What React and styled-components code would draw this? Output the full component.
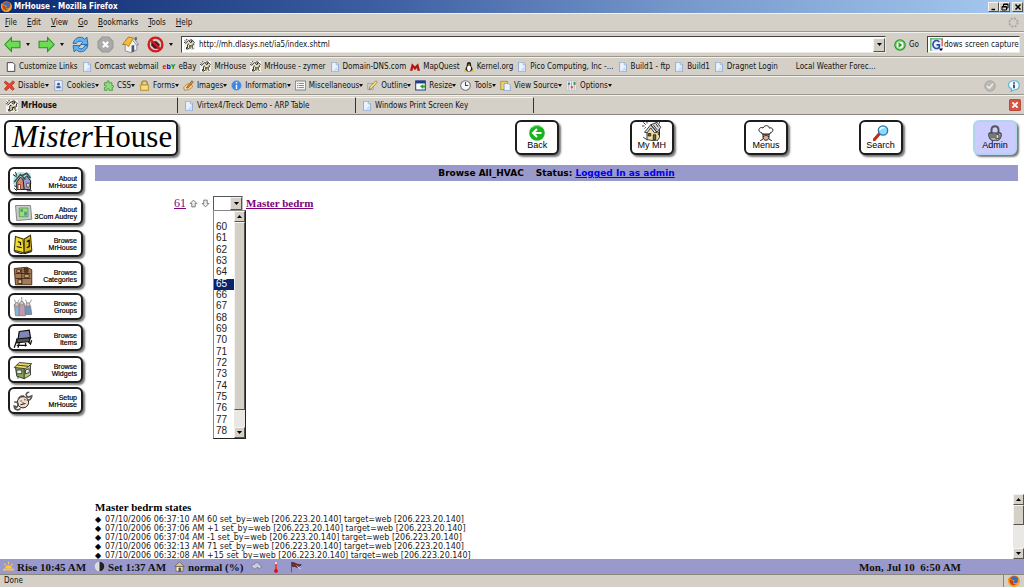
import React from "react";
import styled, { createGlobalStyle, css } from "styled-components";

const GlobalStyle = createGlobalStyle`
  *, *::before, *::after { box-sizing: border-box; }
  html, body { margin: 0; padding: 0; overflow: hidden; }
  button, input, select { font: inherit; color: inherit; margin: 0; padding: 0; }
  button { background: none; border: 0; white-space: nowrap; }
`;

const raised = css`
  background: #d4d0c8;
  border: 1px solid;
  border-color: #f6f4f0 #55534e #55534e #f6f4f0;
`;

const Window = styled.div`
  display: flex;
  flex-direction: column;
  height: 100vh;
  background: #d4d0c8;
  color: #111;
  font: 8px/12px "DejaVu Sans Condensed", "DejaVu Sans", sans-serif;
  svg { display: block; flex: none; }
`;

const TitleBar = styled.div`
  display: flex;
  align-items: center;
  flex: none;
  height: 13px;
  padding: 0 1px;
  gap: 2px;
  color: #fff;
  font-weight: bold;
  background: linear-gradient(90deg, #0d2b71, #3f60a3 38%, #7597cb 66%, #a6caf0);
`;

const WindowButtons = styled.div`
  display: flex;
  margin-left: auto;
`;

const WindowButton = styled.button`
  ${raised}
  display: flex;
  align-items: center;
  justify-content: center;
  width: 11px;
  height: 10px;
  margin-left: ${(props) => (props.$apart ? "2px" : 0)};
`;

const Bar = styled.div`
  display: flex;
  align-items: center;
  flex: none;
  height: ${(props) => props.$height || 19}px;
  padding: 0 ${(props) => props.$pad || 4}px;
  gap: ${(props) => props.$gap || 0}px;
  border-top: 1px solid #f4f2ee;
  border-bottom: 1px solid #9b978e;
  white-space: nowrap;
`;

const Spacer = styled.span`
  flex: 1;
`;

const MenuButton = styled.button`
  padding: 0 5px 0 0;
  margin-right: 5px;
  &::first-letter { text-decoration: underline; }
`;

const NavButton = styled.button`
  display: flex;
  align-items: center;
  gap: 5px;
`;

const Caret = styled.span`
  width: 0;
  height: 0;
  border: 2px solid transparent;
  border-top: 3px solid #111;
  border-bottom: 0;
`;

const Field = styled.div`
  display: flex;
  align-items: center;
  gap: ${(props) => (props.$grow ? "4px" : "1px")};
  height: 17px;
  padding-left: 2px;
  background: #fff;
  border: 1px solid;
  border-color: #444 #ece9e2 #ece9e2 #444;
  flex: ${(props) => (props.$grow ? 1 : "none")};
  width: ${(props) => (props.$grow ? "auto" : "93px")};
  input { flex: 1; min-width: 0; border: 0; outline: 0; background: none; }
`;

const DropButton = styled.button`
  ${raised}
  display: flex;
  align-items: center;
  justify-content: center;
  flex: none;
  width: ${(props) => props.$width || 12}px;
  height: ${(props) => props.$height || 14}px;
`;

const Bookmark = styled.a`
  display: flex;
  align-items: center;
  gap: 3px;
  color: inherit;
  text-decoration: none;
`;

const ToolButton = styled.button`
  display: flex;
  align-items: center;
  gap: 3px;
  span { display: flex; align-items: center; }
`;

const ToolInfo = styled.div`
  display: flex;
  gap: 12px;
  margin-left: auto;
`;

const Tabs = styled.div`
  display: flex;
  flex: none;
  height: 20px;
  padding-right: 3px;
  align-items: center;
  border-top: 1px solid #f4f2ee;
  border-bottom: 1px solid #89857e;
`;

const Tab = styled.button`
  display: flex;
  align-items: center;
  gap: 3px;
  width: 178px;
  height: 16px;
  padding-left: 6px;
  border-top: 1px solid #f4f2ee;
  border-right: 1px solid #333;
  font-weight: ${(props) => (props.$active ? "bold" : "normal")};
`;

const Page = styled.div`
  display: flex;
  flex-direction: column;
  flex: 1;
  min-height: 0;
  background: #fff;
  color: #000;
`;

const Header = styled.header`
  display: flex;
  justify-content: space-between;
  flex: none;
  height: 50px;
  padding: 5px 7px 0 4px;
`;

const plate = css`
  border: 2px solid #1d1d1d;
  border-radius: 6px;
  background: #fff;
  box-shadow: 2px 2px 2px #777;
`;

const Logo = styled.div`
  ${plate}
  width: 174px;
  height: 36px;
  padding-left: 6px;
  font: 31px/30px "Liberation Serif", serif;
  white-space: nowrap;
`;

const TopNav = styled.nav`
  display: flex;
  justify-content: space-between;
  width: 49vw;
`;

const TopButton = styled.button`
  ${plate}
  display: flex;
  flex-direction: column;
  align-items: center;
  justify-content: flex-end;
  width: 44px;
  height: 35px;
  padding-bottom: 3px;
  font: 9px/9px "Liberation Sans", sans-serif;
  ${(props) =>
    props.$active &&
    css`
      background: #ccccff;
      border-color: #aed6ee;
    `}
`;

const Columns = styled.div`
  display: flex;
  flex: 1;
  min-height: 0;
`;

const Sidebar = styled.nav`
  display: flex;
  flex-direction: column;
  justify-content: space-between;
  flex: none;
  width: 95px;
  height: 249px;
  padding: 2px 0 0 8px;
`;

const SideButton = styled.button`
  ${plate}
  display: flex;
  align-items: center;
  justify-content: space-between;
  width: 75px;
  height: 27px;
  padding: 2px 4px 0 3px;
  font: 7px/7px "Liberation Sans", sans-serif;
  text-align: right;
  -webkit-text-stroke: 0.2px #000;
  span { white-space: pre; }
`;

const Content = styled.main`
  display: flex;
  flex-direction: column;
  flex: 1;
  min-width: 0;
`;

const StatusLine = styled.div`
  display: flex;
  justify-content: center;
  gap: 12px;
  flex: none;
  height: 16px;
  margin-right: 6px;
  background: #9999cc;
  font: bold 9px/16px "DejaVu Sans", sans-serif;
`;

const Device = styled.div`
  display: flex;
  align-items: center;
  gap: 3px;
  padding: 14px 0 0 79px;
  font: 11px/16px "Liberation Serif", serif;
`;

const Link = styled.a`
  color: ${(props) => (props.$visited ? "#800080" : "#0000ee")};
  font-weight: ${(props) => (props.$strong ? "bold" : "inherit")};
  font-size: ${(props) => (props.$size ? `${props.$size}px` : "inherit")};
  text-decoration: underline;
`;

const Combo = styled.div`
  position: relative;
  display: flex;
  align-items: center;
  width: 30px;
  height: 15px;
  border: 1px solid;
  border-color: #555 #bbb #bbb #555;
  select {
    flex: 1;
    min-width: 0;
    height: 13px;
    border: 0;
    appearance: none;
    background: #fff;
  }
`;

const Popup = styled.div`
  position: absolute;
  top: 13px;
  left: -1px;
  display: flex;
  width: 33px;
  height: 229px;
  border: 1px solid;
  border-color: #888 #222 #222 #888;
  background: #fff;
`;

const Options = styled.ul`
  display: grid;
  grid-auto-rows: 1fr;
  flex: 1;
  margin: 0;
  padding: 0;
  list-style: none;
  font: 10px/10px "Liberation Sans", sans-serif;
`;

const Option = styled.li`
  padding-left: 2px;
  color: ${(props) => (props.$selected ? "#fff" : "#222")};
  background: ${(props) => (props.$selected ? "#0a246a" : "none")};
`;

const ScrollTrack = styled.div`
  display: flex;
  flex-direction: column;
  flex: none;
  width: 11px;
  background: #eae8e4;
`;

const Thumb = styled.div`
  ${raised}
  height: ${(props) => props.$height};
`;

const Frame = styled.section`
  display: flex;
  justify-content: space-between;
  flex: none;
  height: 65px;
  margin-top: auto;
  overflow: hidden;
`;

const States = styled.div`
  padding-top: 6px;
  h2 { margin: 0 0 1px; font: bold 11px/14px "Liberation Serif", serif; }
  ul { margin: 0; padding: 0; list-style: none; font: 8px/9px "DejaVu Sans", sans-serif; }
  li { display: flex; align-items: center; gap: 5px; white-space: nowrap; color: #222; }
  li::before { content: "◆"; width: 5px; color: #000; }
`;

const Footer = styled.footer`
  display: flex;
  align-items: center;
  flex: none;
  gap: 8px;
  height: 15px;
  padding: 0 63px 0 3px;
  background: #9999cc;
  font: bold 11px/14px "Liberation Serif", serif;
  white-space: pre;
  > span { display: flex; align-items: center; gap: 3px; }
`;

const StatusBar = styled.div`
  display: flex;
  align-items: center;
  justify-content: space-between;
  flex: none;
  height: 13px;
  padding: 0 4px 0 4px;
  border-top: 1px solid #8b877f;
`;

const StatusPanel = styled.div`
  padding-left: 4px;
  border-left: 1px solid #8b877f;
`;

/* ---------- icons, all drawn on a 16 unit grid ---------- */

const Svg = ({ size = 11, children }) => (
  <svg width={size} height={size} viewBox="0 0 16 16" aria-hidden="true">
    {children}
  </svg>
);

const drawings = {
  page: (
    <g stroke="#6f93c4">
      <path d="M2.500.500h8l3 3v12h-11z" fill="#e9f2ff" />
      <path d="M10 1v3.500h3.500" fill="#fff" />
      <path d="M5 14h7V7z" fill="#c4dafa" stroke="none" />
    </g>
  ),
  blank: <path d="M2 1h9l3 3v11H2z" fill="#fff" stroke="#333" strokeWidth="1.400" />,
  house: (
    <g>
      <path d="M0 0h16v16H0z" fill="#f3f2ee" />
      <path d="M5 7l3-3 5 4v6l-8 1z" fill="#efe6b8" />
      <path d="M2 7l5-5 3 4M8 2l3-1 4 4-2 2M1 2l2 2M0 5h2M4 0v2M5 8v5M8 9l1 5M5 15l3-2M12 8v5M14 7v2M12 15l2-2" fill="none" stroke="#222" strokeWidth="1.300" />
      <path d="M10 2h2v3h-2zM6 6l2 2H5zM3 12h2v3H3zM9 9h2v2H9z" fill="#222" />
    </g>
  ),
  cross: <path d="M2 1.500 8 6l5-5 2.500 2.500L11 8l4 5-2.500 2L8 11l-5 4.500L.5 13 5 8 .5 4z" fill="#e5452e" stroke="#a92716" />,
  cookie: (
    <g>
      <path d="M2.500.500h11v15h-11z" fill="#e6eeff" stroke="#7d90b5" />
      <circle cx="8" cy="6" r="2" fill="#35589a" />
      <path d="M5 12V9h6v3z" fill="#35589a" />
    </g>
  ),
  puzzle: <path d="M2 4h4c-1-4 4-4 3 0h4v4c4-1 3 4 0 3l1 4H9c0-4-4-3-3 0H2v-4c4 0 3-4 0-3z" fill="#8edc7e" stroke="#2e8a28" />,
  lock: (
    <g>
      <path d="M4 8V5c0-5 8-5 8 0v3" fill="none" stroke="#b28a1d" strokeWidth="2" />
      <path d="M2 7h12v8H2z" fill="#f5cf55" stroke="#a77c12" />
      <path d="M4 10h8M4 12h8" stroke="#fff2a8" />
    </g>
  ),
  brush: (
    <g>
      <path d="M1 11c3-5 7-6 11-5l2 4-5 4-7 1z" fill="#f3d79c" stroke="#9c7334" />
      <path d="m5 11 8-10 2 2-8 9z" fill="#e58b22" stroke="#7b5325" />
    </g>
  ),
  info: (
    <g>
      <circle cx="8" cy="8" r="7.200" fill="#3d86e0" stroke="#94bdf0" />
      <path d="M7 7h2v6H7zM7 3h2v2H7z" fill="#fff" />
    </g>
  ),
  form: (
    <g>
      <path d="M.5 1.500h15v13H.5z" fill="#f7f7f7" stroke="#555" />
      <path d="M3 5h2m1 0h7M3 8h2m1 0h7M3 11h2m1 0h7" stroke="#555" />
    </g>
  ),
  pencil: (
    <g>
      <path d="M1 5h8v9H1z" fill="none" stroke="#7d96c8" />
      <path d="M3 14 5 9l8-8 2 2-8 9z" fill="#ffe48a" stroke="#8c6c1d" />
    </g>
  ),
  resize: (
    <g>
      <path d="M1 1.500h14v13H1z" fill="#fff" stroke="#1c3d8c" strokeWidth="1.500" />
      <path d="M1 1h14v4H1z" fill="#1c3d8c" />
      <path d="m7 9 5-3v2h3v3h-3v2z" fill="#2ca52f" />
    </g>
  ),
  clock: (
    <g>
      <circle cx="8" cy="8" r="7" fill="#f4f6fa" stroke="#777" strokeWidth="1.500" />
      <path d="M8 3v5h4" fill="none" stroke="#444" strokeWidth="1.500" />
    </g>
  ),
  paste: (
    <g>
      <path d="M1 2h10v12H1z" fill="#f2cf68" stroke="#9e7c2b" />
      <path d="M6 5h6l3 3v7.500H6z" fill="#eaf2ff" stroke="#6f93c4" />
    </g>
  ),
  sliders: (
    <g>
      <path d="M1 1h14v14H1z" fill="#eee" stroke="#bbb" />
      <path d="M4 2v12M8 2v12M12 2v12" stroke="#999" />
      <path d="M3 4h3v3H3z" fill="#4b79c9" />
      <path d="M7 9h3v3H7z" fill="#d34b4b" />
      <path d="M11 3h3v4h-3z" fill="#399a58" />
    </g>
  ),
  map: <path d="M0 14 3 2l5 5 5-5 3 12h-4l-1-5-3 4-3-4-1 5z" fill="#b81313" />,
  penguin: (
    <g>
      <path d="M8 0c5 0 2 5 5 9 2 4 0 6-5 6s-7-2-5-6c3-4 0-9 5-9z" fill="#222" />
      <ellipse cx="8" cy="10" rx="3" ry="4.500" fill="#fff" />
      <path d="M6 4h4L8 6zM2 12l4 3H0zM14 12l-4 3h6z" fill="#edb51c" />
    </g>
  ),
  firefox: (
    <g>
      <circle cx="8" cy="8" r="7.500" fill="#e57717" />
      <circle cx="8.500" cy="6.500" r="4.800" fill="#3e69bd" />
      <path d="M1 3c0 4 5 2 8 5-3 0-2 4 2 3 3-1 4-5 2-9 5 5 3 14-5 14C1 16-2 8 1 3z" fill="#f3a52a" />
      <path d="M2 5c1 2 3 1 5 3-1 3 1 5 4 4-3 4-10 1-9-7z" fill="#c9400d" />
    </g>
  ),
  arrowLeft: <path d="M.7 8 7 1.500V5h8v6H7v3.500z" fill="#6edb55" stroke="#2c8f2a" />,
  arrowRight: <path d="M15.300 8 9 1.500V5H1v6h8v3.500z" fill="#6edb55" stroke="#2c8f2a" />,
  reload: (
    <g fill="#65b1ee" stroke="#1d5fa8" strokeWidth=".8">
      <path d="M1 7c1-5 7-8 11-4l2-2 1 7H8l2-2C8 4 5 5 4 7z" />
      <path d="M15 9c-1 5-7 8-11 4l-2 2-1-6h7l-2 2c2 2 5 1 6-2z" />
    </g>
  ),
  stop: (
    <g>
      <path d="M5 1h6l4 4v6l-4 4H5l-4-4V5z" fill="#aaa" stroke="#999" />
      <path d="m5.500 5.500 5 5m0-5-5 5" stroke="#fff" strokeWidth="2" />
    </g>
  ),
  home: (
    <g>
      <path d="M3 8v6l5 1.500L14 13V7l-4-4z" fill="#f4f4f4" stroke="#778" strokeWidth=".7" />
      <path d="M9 9v6.500l2.500-1V8.500z" fill="#4a5877" />
      <path d="M.5 8 6 1l5 1-5 8-2-2z" fill="#f5bd3a" stroke="#a7711a" strokeWidth=".8" />
      <path d="M11 2l4.500 6-2 .5-3-4" fill="#dce9f8" stroke="#678" strokeWidth=".7" />
      <path d="M12 1h2v3h-2z" fill="#667" />
    </g>
  ),
  block: (
    <g>
      <path d="M4 5h5l3 3-1 4H7L4 9z" fill="#513" />
      <circle cx="8" cy="8" r="6.500" fill="none" stroke="#d21d1d" strokeWidth="2.200" />
      <path d="m3.500 3.500 9 9" stroke="#d21d1d" strokeWidth="2" />
    </g>
  ),
  go: (
    <g>
      <circle cx="8" cy="8" r="7" fill="#7ad46b" stroke="#2b9329" strokeWidth="1.500" />
      <circle cx="8" cy="8" r="4.500" fill="#fff" />
      <path d="M6 4v8l5-4z" fill="#2ba029" />
    </g>
  ),
  google: (
    <g>
      <path d="M0 0h16v16H0z" fill="#e8effc" />
      <path d="M1 0v16M0 1h16" stroke="#57b05c" strokeWidth="1.500" />
      <path d="M15 1v9" stroke="#d64c43" strokeWidth="1.500" />
      <path d="M11.500 5c-3-4-8-1-8 3s5 7 8 3V8.500H8" fill="none" stroke="#2949a8" strokeWidth="2" />
      <path d="M11 13h5l-2.500 3z" fill="#000" />
    </g>
  ),
  throbber: <circle cx="8" cy="8" r="6" fill="none" stroke="#aaa" strokeWidth="3" strokeDasharray="3 1.700" />,
  check: (
    <g>
      <circle cx="8" cy="8" r="7" fill="#bcbab5" stroke="#a19e98" />
      <path d="m4 8 3 3 5-6" fill="none" stroke="#eee" strokeWidth="2" />
    </g>
  ),
  bubble: (
    <g>
      <path d="M8 1c9 0 9 12 1 12l-5 2 1-3C-2 9 0 1 8 1z" fill="#f5fbff" stroke="#58b4df" strokeWidth="1.500" />
      <path d="M7 6h2v5H7zM7 3h2v2H7z" fill="#124" />
    </g>
  ),
  close: (
    <g>
      <rect x=".5" y=".5" width="15" height="15" rx="2" fill="#d9513f" stroke="#a33426" />
      <path d="m4.500 4.500 7 7m0-7-7 7" stroke="#fff" strokeWidth="2.500" />
    </g>
  ),
  back: (
    <g>
      <circle cx="8" cy="8" r="7.800" fill="#18b41e" />
      <path d="M3 3c3-3 8-3 10 0" stroke="#7de26c" fill="none" />
      <path d="M12.500 8H4m4-4L4 8l4 4" fill="none" stroke="#fff" strokeWidth="2" />
    </g>
  ),
  cottage: (
    <g stroke="#222" strokeWidth=".7">
      <path d="M4 8v7l8 1 2-3V5l-4-3z" fill="#eee3a4" />
      <path d="m2 9 5-6 5 6-2 .5-3-4-3 4zM7 3l5-2 3 4-3 4z" fill="#ddd" />
      <path d="M5 10h2v2H5zM9 11h2v4H9z" fill="#776532" />
      <path d="M11 0h3v2M1 1l2 2M0 4h2M4 0v2M2 6l1-1M1 13l3 2M13 9h1v2h-1zM9 3l3 4M11 2l2 3" fill="none" stroke="#222" />
    </g>
  ),
  chef: (
    <g stroke="#222" strokeWidth="1">
      <path d="M5 9h6v4c-1 3-5 3-6 0z" fill="#e4ad91" />
      <path d="M4 8C-2 6 2 1 5 3c2-4 7-2 6 0 5-1 5 4 1 5v1H4z" fill="#fff" />
      <path d="M5 12c2-2 4-2 6 0M2 16l3-2M14 16l-3-2" fill="none" />
    </g>
  ),
  magnifier: (
    <g>
      <path d="m1 15 6-7" stroke="#bf2d18" strokeWidth="3" strokeLinecap="round" />
      <circle cx="10" cy="5.500" r="4.700" fill="#85dcff" stroke="#31759f" strokeWidth="1.300" />
      <path d="M7 5c0-2 2-3 4-2" stroke="#fff" strokeWidth="1.500" fill="none" />
    </g>
  ),
  padlock: (
    <g>
      <path d="M4.500 8V5c0-5 7-5 7 0v3" stroke="#555" strokeWidth="2" fill="none" />
      <path d="M2 8h12c1 5-2 8-6 8s-7-3-6-8z" fill="#aaa" stroke="#222" />
      <path d="M3 10h5M3 12h5M9 9l3 1v3l-3 1z" stroke="#444" fill="#ddd" />
    </g>
  ),
  village: (
    <g>
      <path d="M1 2 5 0l9 1 1 8-3 5H4L0 9z" fill="#a5e6e6" />
      <path d="M3 8l3-4 3 3v7H3z" fill="#d08a6c" stroke="#222" strokeWidth=".8" />
      <path d="m8 6 3-3 3 4v7H9z" fill="#8f9fd0" stroke="#222" strokeWidth=".8" />
      <path d="M1 8l5-6 4 4M7 3l4-2 3 4" stroke="#444" strokeWidth="1.200" fill="none" />
      <path d="M4 10h2v4H4zM11 9h2v3h-2z" fill="#ffd" stroke="#733" strokeWidth=".7" />
      <path d="M0 2l3 2M2 0l1 3M1 13l2 2M1 11l2 1M11 15h4" stroke="#222" strokeWidth=".8" />
    </g>
  ),
  audrey: (
    <g>
      <path d="M2 2h12l1 11-12 1z" fill="#c8cfc9" stroke="#888" strokeWidth=".8" />
      <path d="M5 4h7v7H5z" fill="#9ddd6a" stroke="#597" strokeWidth=".7" />
      <path d="M6 5h2v2H6zM9 7h2v3H9z" fill="#519186" />
    </g>
  ),
  book: (
    <g stroke="#4a3b00" strokeWidth=".9">
      <path d="M2 2 8 4l1 11-8-2z" fill="#f0dc32" />
      <path d="m9 4 5-3 1 12-6 2z" fill="#d6b91d" />
      <path d="M4 6l2 1v2M3 10l4 1M11 6l2-1v5l-2 1M1 14l7 2 7-2" fill="none" stroke="#111" strokeWidth="1" />
    </g>
  ),
  cabinet: (
    <g stroke="#3d2512" strokeWidth=".7">
      <path d="m1 2 10-1 4 2v12H2z" fill="#a67a55" />
      <path d="M2 6h12M2 10h12M7 2v13" />
      <path d="M3 3h3v2H3zM9 7h4v2H9zM4 11h3v3H4z" fill="#dfc39b" />
      <path d="M9 2h3v3H9z" fill="#5c3a22" />
    </g>
  ),
  people: (
    <g stroke="#778" strokeWidth=".6">
      <path d="M1 6h4v9H2z" fill="#8db1cf" />
      <path d="M5 5h4l1 10H5z" fill="#c09bb0" />
      <path d="M10 7h4l1 7h-5z" fill="#7196b5" />
      <path d="M1 2l2 4 2-4M7 0v5M10 2l2 5 3-5" fill="none" />
      <circle cx="3" cy="6" r="1.500" fill="#e9c6ae" />
      <circle cx="7" cy="5" r="1.500" fill="#e9c6ae" />
      <circle cx="12" cy="6" r="1.500" fill="#e9c6ae" />
    </g>
  ),
  machine: (
    <g stroke="#111" strokeWidth="1">
      <path d="m5 2 8-1 1 6-10 2z" fill="#8087b5" />
      <path d="m3 8 11-1-1 3-10 1z" fill="#555" />
      <path d="M3 9 1 15M5 11l-1 4M12 10l2 2 1-3M10 11v3M3 13h8" fill="none" />
    </g>
  ),
  shop: (
    <g stroke="#333" strokeWidth=".7">
      <path d="M2 6h7v9l-6-2z" fill="#88a84e" />
      <path d="m9 6 5-2v8l-5 3z" fill="#b9cb7d" />
      <path d="m1 6 4-4 10 1-5 4z" fill="#e3da6b" />
      <path d="M3 8h4v3H3zM10 8l3-1v3l-3 1z" fill="#eee" />
      <path d="m3 4 9 1M4 13v2" />
    </g>
  ),
  wrench: (
    <g stroke="#222" strokeWidth=".8">
      <circle cx="8" cy="9" r="4.500" fill="#f3dccb" />
      <path d="M13 1c-3 0-3 3-1 4l3-1c0 2-2 4-4 3M1 9c3-1 4 2 2 4l-2-1c0 3 3 4 5 2" fill="none" stroke="#555" strokeWidth="1.300" />
      <path d="M6 8h1M9 7h1M6 11l4-1M8 9v1M4 6l2-2 3 0" fill="none" />
    </g>
  ),
  up: <path d="m8 2 6 6h-3v6H5V8H2z" fill="#eee" stroke="#777" strokeWidth="1.700" />,
  down: <path d="m8 14 6-6h-3V2H5v6H2z" fill="#eee" stroke="#777" strokeWidth="1.700" />,
  sunrise: (
    <g>
      <path d="M3 11a5 5 0 0 1 10 0z" fill="#ffc928" />
      <path d="M8 1v3M2 4l2 2M14 4l-2 2" stroke="#ffd659" strokeWidth="1.500" />
      <path d="M0 11h16v3H0z" fill="#f0c05a" />
    </g>
  ),
  moon: (
    <g>
      <circle cx="8" cy="8" r="7" fill="#ddd" />
      <path d="M8 1a7 7 0 0 1 0 14z" fill="#222" />
    </g>
  ),
  littleHouse: (
    <g stroke="#444" strokeWidth=".8">
      <path d="M3 8h10v7H3z" fill="#fff4c8" />
      <path d="m1 8 7-7 7 7z" fill="#e2c27c" />
      <path d="M7 10h3v5H7z" fill="#7a5428" />
    </g>
  ),
  cloud: <path d="M3 10C-1 8 2 4 5 5c1-4 7-3 7 0 5 1 3 6 0 6l-3-2-3 3z" fill="#ccd" stroke="#667" />,
  thermometer: (
    <g>
      <path d="M6.500 1h3v10h-3z" fill="#fff" stroke="#a66" strokeWidth=".6" />
      <path d="M7 4h2v7c3 1 1 5-1 5s-4-4-1-5z" fill="#d60f1a" />
    </g>
  ),
  flag: (
    <g>
      <path d="M2 1v14" stroke="#555" strokeWidth="1.200" />
      <path d="M3 2c4 0 5 3 12 3-3 2-5 4-7 3-2-2-3 0-5-1z" fill="#922" stroke="#222" />
      <path d="m9 6 5 5" stroke="#fff" />
    </g>
  ),
};

const Icon = ({ name, size }) => <Svg size={size}>{drawings[name]}</Svg>;

const Triangle = ({ up }) => (
  <svg width="5" height="3" viewBox="0 0 5 3" aria-hidden="true">
    <path d={up ? "M0 3h5L2.500 0z" : "M0 0h5L2.500 3z"} fill="#000" />
  </svg>
);

/* ---------- data ---------- */

const menus = ["File", "Edit", "View", "Go", "Bookmarks", "Tools", "Help"];

const bookmarks = [
  ["blank", "Customize Links"],
  ["page", "Comcast webmail"],
  ["ebay", "eBay"],
  ["house", "MrHouse"],
  ["house", "MrHouse - zymer"],
  ["page", "Domain-DNS.com"],
  ["map", "MapQuest"],
  ["penguin", "Kernel.org"],
  ["page", "Pico Computing, Inc -..."],
  ["page", "Build1 - ftp"],
  ["page", "Build1"],
  ["page", "Dragnet Login"],
  [null, "Local Weather Forec..."],
];

const tools = [
  ["cross", "Disable"],
  ["cookie", "Cookies"],
  ["puzzle", "CSS"],
  ["lock", "Forms"],
  ["brush", "Images"],
  ["info", "Information"],
  ["form", "Miscellaneous"],
  ["pencil", "Outline"],
  ["resize", "Resize"],
  ["clock", "Tools"],
  ["paste", "View Source"],
  ["sliders", "Options"],
];

const topButtons = [
  ["back", "Back"],
  ["cottage", "My MH"],
  ["chef", "Menus"],
  ["magnifier", "Search"],
  ["padlock", "Admin"],
];

const sideButtons = [
  ["village", "About\nMrHouse"],
  ["audrey", "About\n3Com Audrey"],
  ["book", "Browse\nMrHouse"],
  ["cabinet", "Browse\nCategories"],
  ["people", "Browse\nGroups"],
  ["machine", "Browse\nItems"],
  ["shop", "Browse\nWidgets"],
  ["wrench", "Setup\nMrHouse"],
];

const temperatures = ["", ...Array.from({ length: 19 }, (_, i) => String(60 + i))];

const source = "set_by=web [206.223.20.140] target=web [206.223.20.140]";
const states = [
  `07/10/2006 06:37:10 AM 60 ${source}`,
  `07/10/2006 06:37:06 AM +1 ${source}`,
  `07/10/2006 06:37:04 AM -1 ${source}`,
  `07/10/2006 06:32:13 AM 71 ${source}`,
  `07/10/2006 06:32:08 AM +15 ${source}`,
];

const EbayMark = styled.b`
  display: flex;
  font: bold 7px/10px "Liberation Sans", sans-serif;
  i { font-style: normal; }
  i:nth-child(1) { color: #e00; }
  i:nth-child(2) { color: #00c; }
  i:nth-child(3) { color: #080; }
`;

const BookmarkGap = styled.span`
  width: 11px;
`;

const Scrollbar = ({ thumb }) => (
  <ScrollTrack>
    <DropButton $width={11} $height={11} aria-label="Scroll up">
      <Triangle up />
    </DropButton>
    <Thumb $height={thumb} />
    <Spacer />
    <DropButton $width={11} $height={11} aria-label="Scroll down">
      <Triangle />
    </DropButton>
  </ScrollTrack>
);

const bookmarkIcon = (icon) => {
  if (!icon) return <BookmarkGap />;
  if (icon === "ebay") {
    return (
      <EbayMark aria-hidden="true">
        <i>e</i>
        <i>b</i>
        <i>Y</i>
      </EbayMark>
    );
  }
  return <Icon name={icon} size={icon === "house" ? 11 : 10} />;
};

const Browser = () => (
  <>
    <TitleBar>
      <Icon name="firefox" />
      MrHouse - Mozilla Firefox
      <WindowButtons>
        <WindowButton aria-label="Minimize">
          <Svg size={8}><path d="M3 13h7" stroke="#000" strokeWidth="3" /></Svg>
        </WindowButton>
        <WindowButton aria-label="Restore">
          <Svg size={8}>
            <path d="M5 6V2h9v8h-3M2 7h9v7H2zM5 3h9M2 8h9" fill="none" stroke="#000" strokeWidth="2" />
          </Svg>
        </WindowButton>
        <WindowButton $apart aria-label="Close">
          <Svg size={8}><path d="m3 3 10 10m0-10L3 13" stroke="#000" strokeWidth="3" /></Svg>
        </WindowButton>
      </WindowButtons>
    </TitleBar>
    <Bar $pad={5}>
      {menus.map((name) => (
        <MenuButton key={name}>{name}</MenuButton>
      ))}
      <Spacer />
      <Icon name="throbber" size={11} />
    </Bar>
    <Bar $height={25} $gap={8}>
      <NavButton aria-label="Back"><Icon name="arrowLeft" size={17} /><Caret /></NavButton>
      <NavButton aria-label="Forward"><Icon name="arrowRight" size={17} /><Caret /></NavButton>
      <NavButton aria-label="Reload"><Icon name="reload" size={17} /></NavButton>
      <NavButton aria-label="Stop"><Icon name="stop" size={17} /></NavButton>
      <NavButton aria-label="Home"><Icon name="home" size={17} /></NavButton>
      <NavButton aria-label="Block"><Icon name="block" size={17} /><Caret /></NavButton>
      <Field $grow>
        <Icon name="house" />
        <input aria-label="Address" defaultValue="http://mh.dlasys.net/ia5/index.shtml" />
        <DropButton aria-label="Show history"><Triangle /></DropButton>
      </Field>
      <ToolButton><Icon name="go" size={12} /> Go</ToolButton>
      <Field>
        <Icon name="google" size={13} />
        <input aria-label="Search" defaultValue="dows screen capture" />
      </Field>
    </Bar>
    <Bar $gap={4} $pad={6}>
      {bookmarks.map(([icon, name]) => (
        <Bookmark key={name} href="#">
          {bookmarkIcon(icon)}
          {name}
        </Bookmark>
      ))}
    </Bar>
    <Bar $gap={4} $pad={4}>
      {tools.map(([icon, name]) => (
        <ToolButton key={name}>
          <Icon name={icon} />
          <span>{name}<Caret /></span>
        </ToolButton>
      ))}
      <ToolInfo>
        <Icon name="check" size={12} />
        <Icon name="bubble" size={12} />
      </ToolInfo>
    </Bar>
    <Tabs>
      <Tab $active><Icon name="house" size={12} />MrHouse</Tab>
      <Tab><Icon name="page" size={10} />Virtex4/Treck Demo - ARP Table</Tab>
      <Tab><Icon name="page" size={10} />Windows Print Screen Key</Tab>
      <Spacer />
      <Icon name="close" size={12} />
    </Tabs>
  </>
);

const Thermostat = () => (
  <Device>
    <Link href="#" $visited $size={12}>61</Link>
    <Icon name="up" size={9} />
    <Icon name="down" size={9} />
    <Combo>
      <select aria-label="Master bedrm" defaultValue="">
        {temperatures.map((value) => (
          <option key={value}>{value}</option>
        ))}
      </select>
      <DropButton $height={13} aria-label="Open list"><Triangle /></DropButton>
      <Popup>
        <Options role="listbox">
          {temperatures.map((value) => (
            <Option key={value} role="option" $selected={value === "65"}>
              {value}
            </Option>
          ))}
        </Options>
        <Scrollbar thumb="188px" />
      </Popup>
    </Combo>
    <Link href="#" $visited $strong>Master bedrm</Link>
  </Device>
);

const App = () => (
  <Window>
    <GlobalStyle />
    <Browser />
    <Page>
      <Header>
        <Logo><i>Mister</i>House</Logo>
        <TopNav>
          {topButtons.map(([icon, name]) => (
            <TopButton key={name} $active={name === "Admin"}>
              <Icon name={icon} size={name === "My MH" ? 20 : 16} />
              {name}
            </TopButton>
          ))}
        </TopNav>
      </Header>
      <Columns>
        <Sidebar>
          {sideButtons.map(([icon, name]) => (
            <SideButton key={name}>
              <Icon name={icon} size={20} />
              <span>{name}</span>
            </SideButton>
          ))}
        </Sidebar>
        <Content>
          <StatusLine>
            <span>Browse All_HVAC</span>
            <span>
              Status: <Link href="#">Logged In as admin</Link>
            </span>
          </StatusLine>
          <Thermostat />
          <Frame>
            <States>
              <h2>Master bedrm states</h2>
              <ul>
                {states.map((line) => (
                  <li key={line}>{line}</li>
                ))}
              </ul>
            </States>
            <Scrollbar thumb="20px" />
          </Frame>
        </Content>
      </Columns>
    </Page>
    <Footer>
      <span><Icon name="sunrise" />Rise 10:45 AM</span>
      <span><Icon name="moon" />Set 1:37 AM</span>
      <span><Icon name="littleHouse" />normal (%)</span>
      <Icon name="cloud" />
      <Icon name="thermometer" size={12} />
      <Icon name="flag" size={12} />
      <Spacer />
      <span>{"Mon, Jul 10  6:50 AM"}</span>
    </Footer>
    <StatusBar>
      Done
      <StatusPanel><Icon name="firefox" size={12} /></StatusPanel>
    </StatusBar>
  </Window>
);

export default App;
